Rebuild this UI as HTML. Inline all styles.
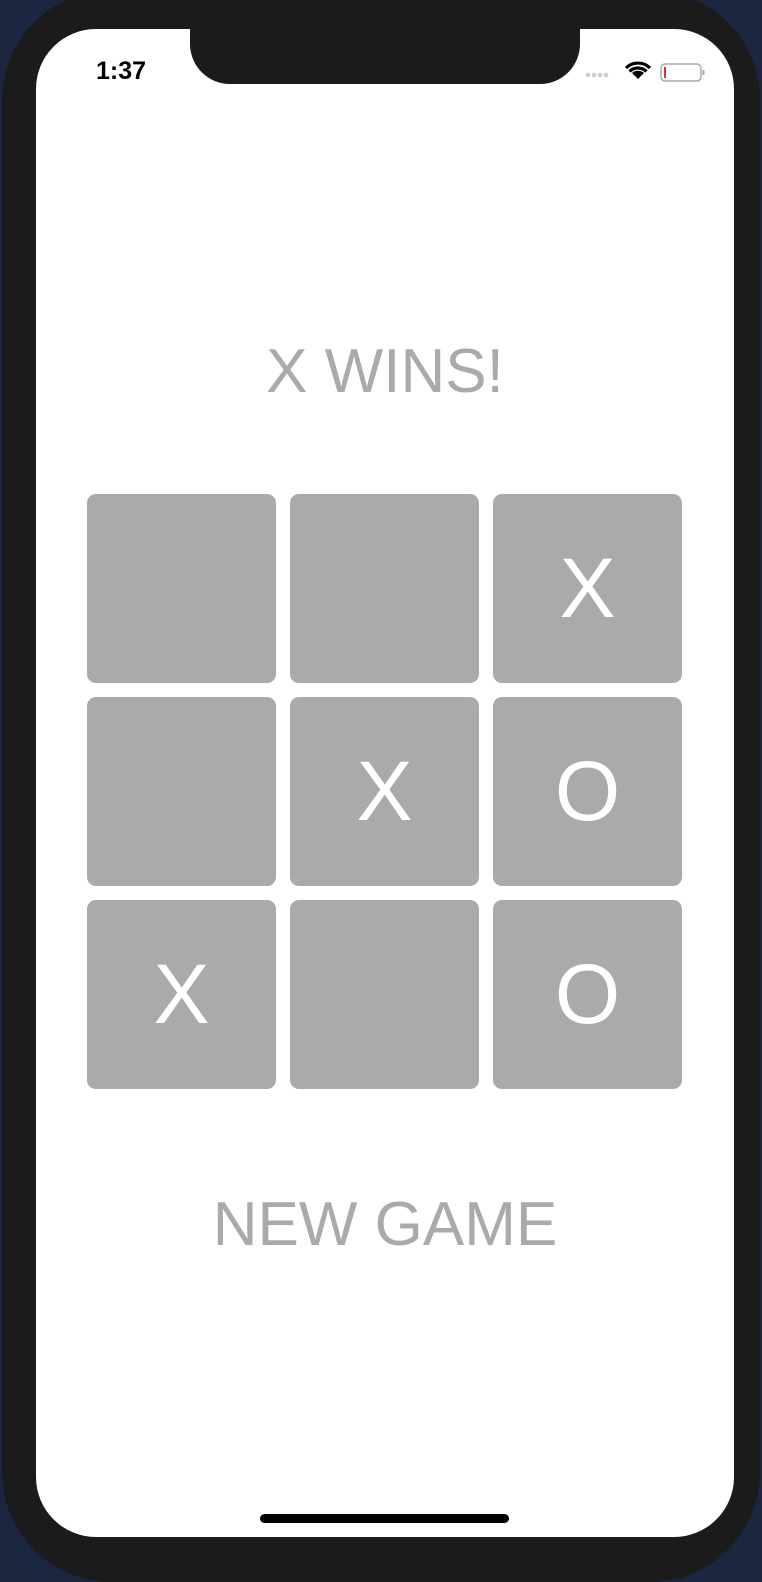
<!DOCTYPE html>
<html><head><style>
body{margin:0;width:762px;height:1572px;background:#1b2741;position:relative;overflow:hidden;font-family:"Liberation Sans",sans-serif}
.phone{position:absolute;left:2px;top:-10px;width:758px;height:1592px;background:#1b1b1b;border-radius:110px}
.screen{position:absolute;left:36px;top:29px;width:698px;height:1508px;background:#fff;border-radius:60px;overflow:hidden}
.notch{position:absolute;left:154px;top:-40px;width:390px;height:95px;background:#1b1b1b;border-radius:0 0 40px 40px}
.time{position:absolute;left:60px;top:28px;font-size:25px;font-weight:bold;color:#000}
.t{position:absolute;left:0;width:698px;text-align:center;color:#aaa;font-size:62px}
.c{position:absolute;width:189px;height:189px;background:#aaa;border-radius:9px;color:#fff;font-size:84px;text-align:center;line-height:189px}
.bar{position:absolute;left:224px;top:1485px;width:249px;height:9px;border-radius:5px;background:#000}
</style></head><body>
<div class="phone"></div>
<div class="screen">
<div class="notch"></div>
<div class="time">1:37</div>
<svg style="position:absolute;left:548px;top:30px" width="122" height="24" viewBox="0 0 122 24">
<g fill="#ccc"><circle cx="4" cy="16" r="2.3"/><circle cx="10" cy="16" r="2.3"/><circle cx="16" cy="16" r="2.3"/><circle cx="22" cy="16" r="2.3"/></g>
<path d="M54 20 L48 14 A9 9 0 0 1 60 14 Z" fill="#000"/>
<path d="M42 9 A17 17 0 0 1 66 9" stroke="#000" stroke-width="3.2" fill="none"/>
<path d="M45.5 12.5 A12 12 0 0 1 62.5 12.5" stroke="#000" stroke-width="3.2" fill="none"/>
<rect x="77" y="5" width="40" height="17" rx="4" fill="none" stroke="#aaa" stroke-width="1.5"/>
<rect x="80" y="8" width="2" height="11" fill="#d33"/>
<rect x="118.5" y="11" width="2" height="5" fill="#aaa"/>
</svg>
<div class="t" style="top:307px">X WINS!</div>
<div class="c" style="left:51px;top:465px"></div>
<div class="c" style="left:254px;top:465px"></div>
<div class="c" style="left:457px;top:465px">X</div>
<div class="c" style="left:51px;top:668px"></div>
<div class="c" style="left:254px;top:668px">X</div>
<div class="c" style="left:457px;top:668px">O</div>
<div class="c" style="left:51px;top:871px">X</div>
<div class="c" style="left:254px;top:871px"></div>
<div class="c" style="left:457px;top:871px">O</div>
<div class="t" style="top:1160px">NEW GAME</div>
<div class="bar"></div>
</div>
</body></html>
